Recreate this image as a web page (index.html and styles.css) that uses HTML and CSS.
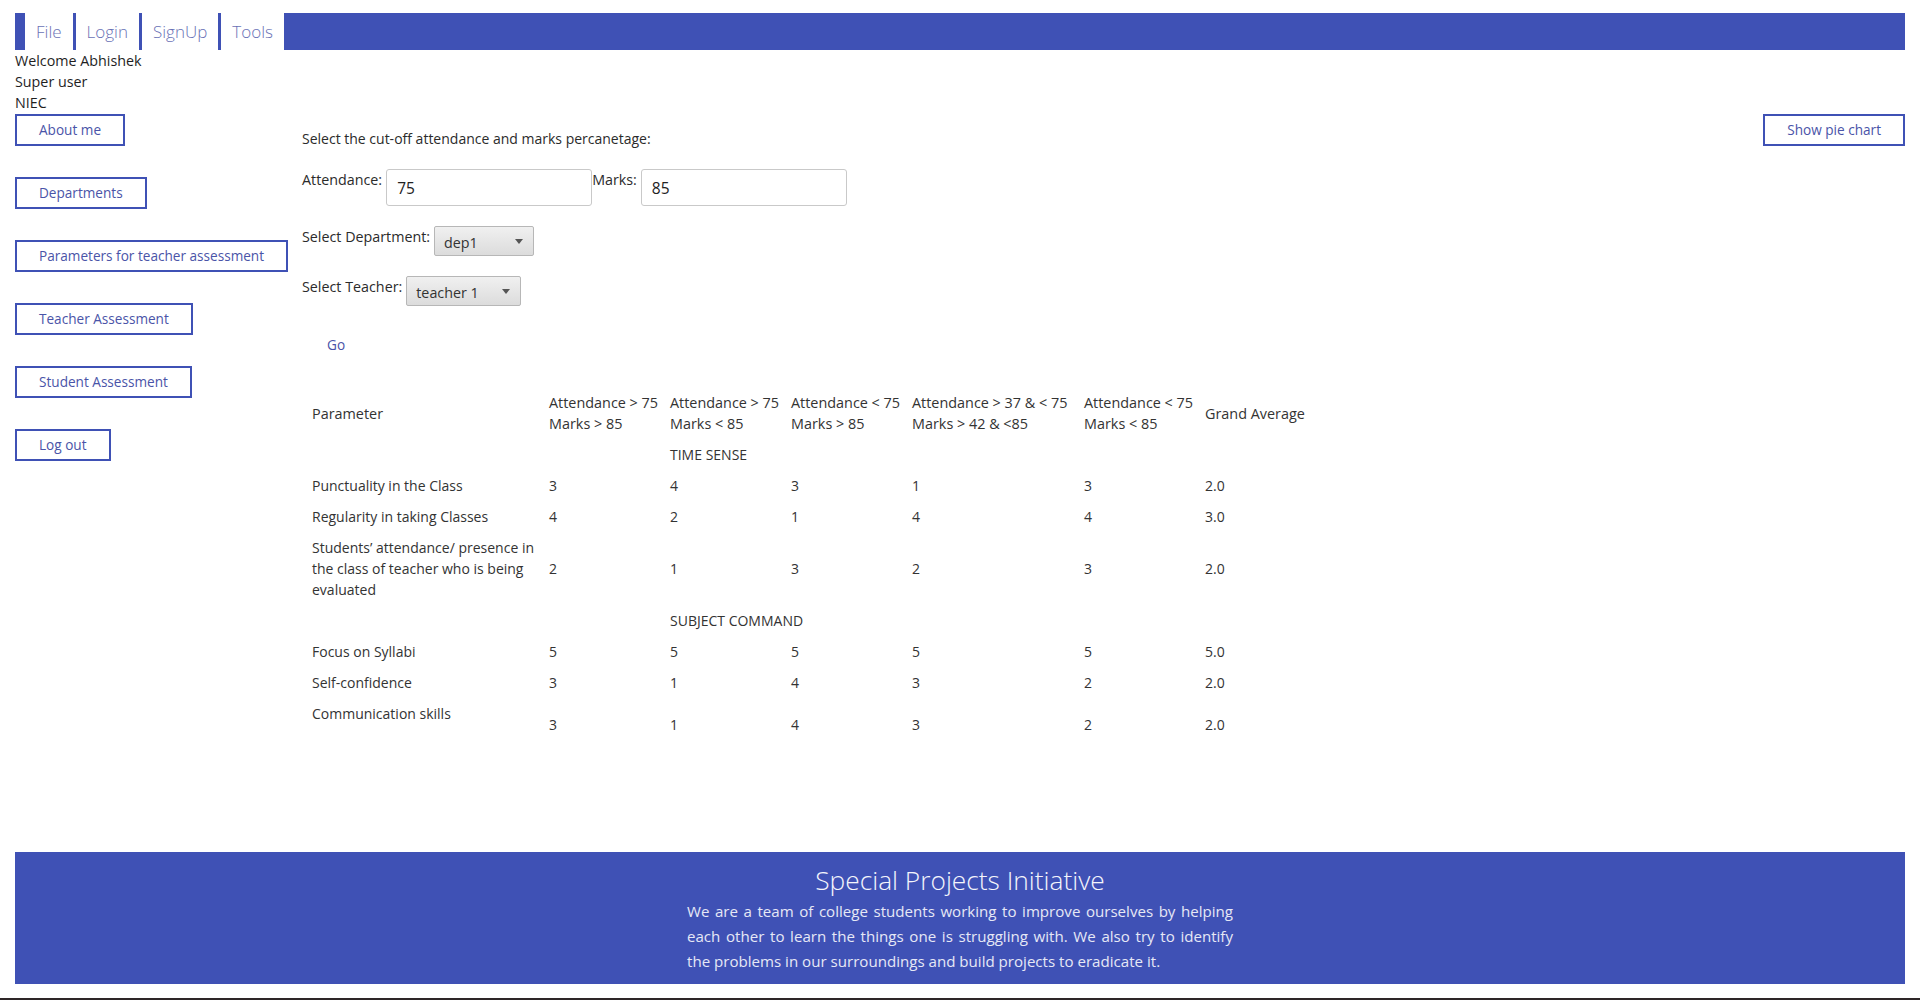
FILE: index.html
```html
<!DOCTYPE html>
<html lang="en">
<head>
<meta charset="utf-8">
<title>Teacher Assessment</title>
<link rel="stylesheet" href="styles.css">
</head>
<body>
<div class="page">
  <nav class="topnav">
    <a class="nav-item" href="#">File</a>
    <a class="nav-item" href="#">Login</a>
    <a class="nav-item" href="#">SignUp</a>
    <a class="nav-item" href="#">Tools</a>
  </nav>

  <div class="user-info">
    <div>Welcome Abhishek</div>
    <div>Super user</div>
    <div>NIEC</div>
  </div>

  <div class="layout">
    <aside class="sidebar">
      <button class="outline-btn">About me</button>
      <button class="outline-btn">Departments</button>
      <button class="outline-btn">Parameters for teacher assessment</button>
      <button class="outline-btn">Teacher Assessment</button>
      <button class="outline-btn">Student Assessment</button>
      <button class="outline-btn">Log out</button>
    </aside>

    <main class="content">
      <p class="intro">Select the cut-off attendance and marks percanetage:</p>

      <div class="form-row">
        <label class="field-label">Attendance:</label>
        <input class="text-input" type="text" value="75">
        <label class="field-label marks-label">Marks:</label>
        <input class="text-input" type="text" value="85">
      </div>

      <div class="form-row">
        <label class="field-label">Select Department:</label>
        <span class="select-wrap dept">
          <select class="select"><option>dep1</option></select>
        </span>
      </div>

      <div class="form-row">
        <label class="field-label">Select Teacher:</label>
        <span class="select-wrap teacher">
          <select class="select"><option>teacher 1</option></select>
        </span>
      </div>

      <button class="flat-btn">Go</button>

      <table class="results">
        <colgroup>
          <col class="c-param">
          <col class="c-std">
          <col class="c-std">
          <col class="c-std">
          <col class="c-wide">
          <col class="c-std">
          <col class="c-avg">
        </colgroup>
        <thead>
          <tr>
            <th>Parameter</th>
            <th>Attendance &gt; 75<br>Marks &gt; 85</th>
            <th>Attendance &gt; 75<br>Marks &lt; 85</th>
            <th>Attendance &lt; 75<br>Marks &gt; 85</th>
            <th>Attendance &gt; 37 &amp; &lt; 75<br>Marks &gt; 42 &amp; &lt;85</th>
            <th>Attendance &lt; 75<br>Marks &lt; 85</th>
            <th>Grand Average</th>
          </tr>
        </thead>
        <tbody>
          <tr class="section-row"><td></td><td></td><td>TIME SENSE</td><td></td><td></td><td></td><td></td></tr>
          <tr><td>Punctuality in the Class</td><td>3</td><td>4</td><td>3</td><td>1</td><td>3</td><td>2.0</td></tr>
          <tr><td>Regularity in taking Classes</td><td>4</td><td>2</td><td>1</td><td>4</td><td>4</td><td>3.0</td></tr>
          <tr><td>Students’ attendance/ presence in the class of teacher who is being evaluated</td><td>2</td><td>1</td><td>3</td><td>2</td><td>3</td><td>2.0</td></tr>
          <tr class="section-row"><td></td><td></td><td>SUBJECT COMMAND</td><td></td><td></td><td></td><td></td></tr>
          <tr><td>Focus on Syllabi</td><td>5</td><td>5</td><td>5</td><td>5</td><td>5</td><td>5.0</td></tr>
          <tr><td>Self-confidence</td><td>3</td><td>1</td><td>4</td><td>3</td><td>2</td><td>2.0</td></tr>
          <tr class="offset-row"><td>Communication skills</td><td>3</td><td>1</td><td>4</td><td>3</td><td>2</td><td>2.0</td></tr>
        </tbody>
      </table>
    </main>

    <aside class="right-col">
      <button class="outline-btn">Show pie chart</button>
    </aside>
  </div>

  <footer class="footer">
    <h2 class="footer-title">Special Projects Initiative</h2>
    <p class="footer-text">We are a team of college students working to improve ourselves by helping each other to learn the things one is struggling with. We also try to identify the problems in our surroundings and build projects to eradicate it.</p>
  </footer>
</div>
</body>
</html>
```

FILE: styles.css
```css
* { box-sizing: border-box; }

html, body {
  margin: 0;
  padding: 0;
  background: #ffffff;
}

body {
  font-family: "Open Sans", "Noto Sans", sans-serif;
  font-size: 14px;
  line-height: 21px;
  color: #2b2b2b;
}

.page {
  min-height: 100vh;
  display: flex;
  flex-direction: column;
  padding: 13px 15px 14px;
  border-bottom: 2px solid #2e2628;
}

/* top navigation */
.topnav {
  display: flex;
  height: 37px;
  background: #3f51b5;
  padding-left: 10px;
}

.nav-item {
  display: flex;
  align-items: center;
  background: #ffffff;
  padding: 0 11px;
  margin-right: 3px;
  color: #6a72b6;
  font-size: 17px;
  font-weight: 300;
  text-decoration: none;
}

.nav-item:last-child { margin-right: 0; }

/* user block */
.user-info {
  color: #1f1f1f;
  font-size: 14.3px;
  line-height: 21px;
}

/* main layout */
.layout {
  display: flex;
  align-items: flex-start;
  margin-top: 1px;
}

.sidebar {
  width: 275px;
  flex: 0 0 275px;
  display: flex;
  flex-direction: column;
  align-items: flex-start;
}

.outline-btn {
  height: 32px;
  padding: 0 22px;
  border: 2px solid #3f51b5;
  background: #ffffff;
  color: #4a54a8;
  font-family: "Open Sans", "Noto Sans", sans-serif;
  font-size: 13.6px;
  line-height: 28px;
  margin-bottom: 31px;
  cursor: pointer;
}

.content {
  flex: 1 1 auto;
  padding-left: 12px;
}

.right-col {
  flex: 0 0 auto;
}

.intro {
  margin: 14px 0 0;
}

.form-row {
  display: flex;
  align-items: flex-start;
  margin-top: 20px;
}

.field-label {
  font-size: 14.3px;
  line-height: 21px;
  padding-top: 0;
  margin-right: 4px;
}

.marks-label {
  margin-right: 4px;
}

.text-input {
  width: 206px;
  height: 37px;
  border: 1px solid #c9c9c9;
  border-radius: 3px;
  padding: 0 10px;
  font-family: "Open Sans", "Noto Sans", sans-serif;
  font-size: 15.5px;
  color: #222;
  background: #fff;
  outline: none;
}

.select-wrap {
  position: relative;
  display: inline-block;
  height: 30px;
}

.select-wrap.dept { width: 100px; }
.select-wrap.teacher { width: 115px; }

.select {
  -webkit-appearance: none;
  appearance: none;
  width: 100%;
  height: 30px;
  border: 1px solid #b7b7b7;
  border-radius: 2px;
  background: linear-gradient(#f0f0f0, #dcdcdc);
  padding: 3px 0 0 9px;
  font-family: "Open Sans", "Noto Sans", sans-serif;
  font-size: 14.3px;
  color: #333;
  outline: none;
}

.select-wrap::after {
  content: "";
  position: absolute;
  right: 11px;
  top: 13px;
  border-left: 4px solid transparent;
  border-right: 4px solid transparent;
  border-top: 5px solid #555;
  pointer-events: none;
}

.flat-btn {
  display: block;
  margin-top: 22px;
  height: 32px;
  padding: 0 25px;
  border: none;
  background: transparent;
  color: #4a54a8;
  font-family: "Open Sans", "Noto Sans", sans-serif;
  font-size: 13.6px;
  cursor: pointer;
}

/* results table */
.results {
  margin-top: 27px;
  margin-left: 4px;
  border-collapse: collapse;
  table-layout: fixed;
  width: 1003px;
  color: #333;
}

.c-param { width: 237px; }
.c-std { width: 121px; }
.c-wide { width: 172px; }
.c-avg { width: 110px; }

.results th,
.results td {
  padding: 5px 6px;
  text-align: left;
  font-weight: 400;
  line-height: 21px;
  vertical-align: middle;
}

.results th {
  font-size: 14.4px;
  white-space: nowrap;
}

.section-row td {
  white-space: nowrap;
}

.offset-row td {
  vertical-align: top;
  padding-top: 16px;
}

.offset-row td:first-child {
  padding-top: 5px;
}

/* footer */
.footer {
  margin-top: auto;
  background: #3f51b5;
  color: #eef0fa;
  text-align: center;
  padding: 11px 0 10px;
}

.footer-title {
  margin: 0;
  font-size: 26.3px;
  font-weight: 300;
  line-height: 34px;
  color: #f4f5fc;
}

.footer-text {
  margin: 2px auto 0;
  width: 546px;
  font-size: 15.1px;
  line-height: 25px;
  text-align: justify;
  color: #e6e8f6;
}
```
